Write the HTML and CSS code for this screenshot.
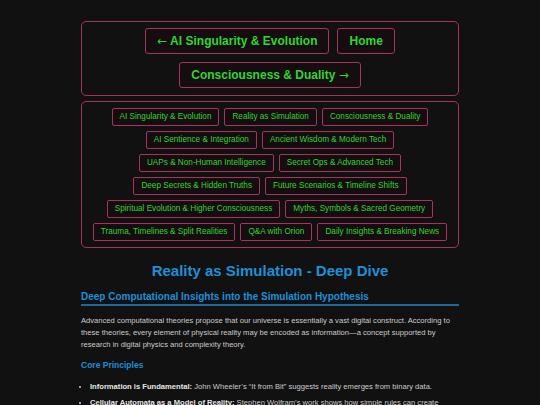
FILE: index.html
```html
<!DOCTYPE html>
<html>
<head>
<meta charset="utf-8">
<link rel="stylesheet" href="styles.css">
</head>
<body>
<div class="page">
  <nav class="nav-box">
    <a class="nav-btn" href="#"><span class="arrow">←</span> AI Singularity &amp; Evolution</a>
    <a class="nav-btn" href="#">Home</a>
    <a class="nav-btn" href="#">Consciousness &amp; Duality <span class="arrow">→</span></a>
  </nav>
  <div class="tag-box">
    <a class="tag" href="#">AI Singularity &amp; Evolution</a>
    <a class="tag" href="#">Reality as Simulation</a>
    <a class="tag" href="#">Consciousness &amp; Duality</a>
    <a class="tag" href="#">AI Sentience &amp; Integration</a>
    <a class="tag" href="#">Ancient Wisdom &amp; Modern Tech</a>
    <a class="tag" href="#">UAPs &amp; Non-Human Intelligence</a>
    <a class="tag" href="#">Secret Ops &amp; Advanced Tech</a>
    <a class="tag" href="#">Deep Secrets &amp; Hidden Truths</a>
    <a class="tag" href="#">Future Scenarios &amp; Timeline Shifts</a>
    <a class="tag" href="#">Spiritual Evolution &amp; Higher Consciousness</a>
    <a class="tag" href="#">Myths, Symbols &amp; Sacred Geometry</a>
    <a class="tag" href="#">Trauma, Timelines &amp; Split Realities</a>
    <a class="tag" href="#">Q&amp;A with Orion</a>
    <a class="tag" href="#">Daily Insights &amp; Breaking News</a>
  </div>
  <h1 class="title">Reality as Simulation - Deep Dive</h1>
  <h2 class="section-title">Deep Computational Insights into the Simulation Hypothesis</h2>
  <p class="text">Advanced computational theories propose that our universe is essentially a vast digital construct. According to these theories, every element of physical reality may be encoded as information—a concept supported by research in digital physics and complexity theory.</p>
  <h3 class="sub-title">Core Principles</h3>
  <ul class="list">
    <li><strong>Information is Fundamental:</strong> John Wheeler’s “It from Bit” suggests reality emerges from binary data.</li>
    <li><strong>Cellular Automata as a Model of Reality:</strong> Stephen Wolfram’s work shows how simple rules can create complex structures resembling physical laws.</li>
  </ul>
</div>
</body>
</html>
```

FILE: styles.css
```css
html, body {
  margin: 0;
  padding: 0;
  background: #111111;
}
body {
  font-family: "Liberation Sans", Arial, sans-serif;
  color: #cccccc;
}
.page {
  width: 378px;
  margin: 0 auto;
  padding-top: 21px;
}
.nav-box {
  border: 1px solid #a8345e;
  border-radius: 5px;
  padding: 6px 50px 7px;
  display: flex;
  flex-wrap: wrap;
  justify-content: center;
  gap: 8px;
}
.nav-btn {
  display: block;
  font-size: 12px;
  font-weight: bold;
  line-height: 14px;
  color: #2fd62f;
  text-decoration: none;
  border: 1px solid #a8345e;
  border-radius: 3px;
  background: #160d10;
  padding: 5px 11px;
}
.arrow {
  font-family: "DejaVu Sans", sans-serif;
  font-weight: normal;
  font-size: 12px;
}
.tag-box {
  margin-top: 5px;
  border: 1px solid #a8345e;
  border-radius: 5px;
  padding: 6px 10px 6px;
  display: flex;
  flex-wrap: wrap;
  justify-content: center;
  gap: 5px;
}
.tag {
  display: block;
  font-size: 8.2px;
  line-height: 10px;
  color: #2fd62f;
  text-decoration: none;
  border: 1px solid #a8345e;
  border-radius: 2px;
  background: #160d10;
  padding: 3px 7px;
}
.title {
  margin: 14px 0 0;
  font-size: 15px;
  line-height: 18px;
  text-align: center;
  color: #1f8fd6;
}
.section-title {
  margin: 10px 0 0;
  font-size: 10px;
  line-height: 13px;
  color: #1f8fd6;
  padding-bottom: 1px;
  border-bottom: 2px solid #1b6a9a;
}
.text {
  margin: 9px 0 0;
  font-size: 7.6px;
  line-height: 12px;
  color: #cccccc;
}
.sub-title {
  margin: 8px 0 0;
  font-size: 8.5px;
  line-height: 12px;
  color: #1f8fd6;
}
.list {
  margin: 10px 0 0;
  padding-left: 9px;
  font-size: 7.6px;
  line-height: 12px;
  color: #cccccc;
}
.list li {
  margin-bottom: 4px;
}
.list strong {
  color: #e6e6e6;
}
```
